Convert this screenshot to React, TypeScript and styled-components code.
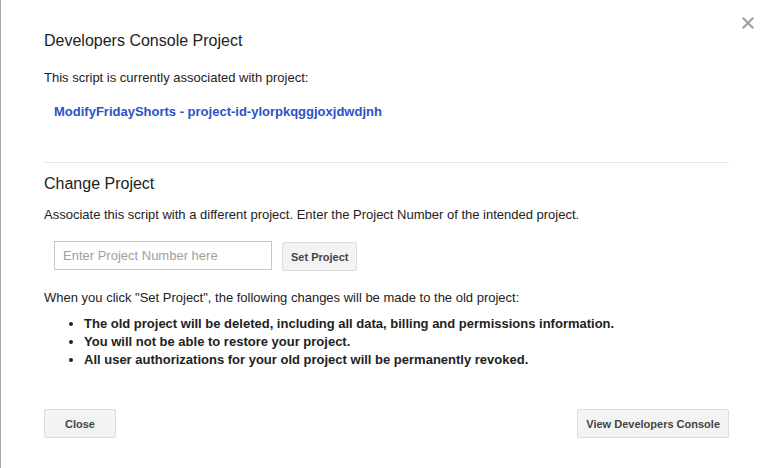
import React from "react";
import styled, { createGlobalStyle } from "styled-components";

const Global = createGlobalStyle`
  html, body { margin: 0; padding: 0; background: #fff; }
  body { font-family: "Liberation Sans", Arial, sans-serif; color: #222; }
  * { box-sizing: border-box; }
`;

const Dialog = styled.div`
  position: relative;
  width: 771px;
  height: 468px;
  border-left: 1px solid #a8a8a8;
  padding: 31px 42px 0 43px;
  background: #fff;
`;

const CloseX = styled.button`
  position: absolute;
  top: 16px;
  right: 16px;
  width: 14px;
  height: 14px;
  padding: 0;
  border: 0;
  background: transparent;
  cursor: pointer;
  display: flex;
  align-items: center;
  justify-content: center;
`;

const Title = styled.h2`
  margin: 0;
  font-size: 16px;
  line-height: 20px;
  font-weight: normal;
  color: #222;
`;

const Text = styled.p<{ $top: number }>`
  margin: ${(p) => p.$top}px 0 0;
  font-size: 13px;
  line-height: 16px;
  color: #222;
`;

const ProjectLink = styled.a`
  display: block;
  margin-top: 18px;
  padding-left: 10px;
  font-size: 13px;
  line-height: 16px;
  font-weight: bold;
  color: #2b52c6;
  text-decoration: none;
`;

const Divider = styled.hr`
  margin: 42px 0 0;
  border: 0;
  border-top: 1px solid #e5e5e5;
  height: 0;
`;

const Section = styled.div`
  margin-top: 11px;
`;

const InputRow = styled.div`
  display: flex;
  align-items: flex-start;
  gap: 10px;
  margin-top: 18px;
  padding-left: 10px;
`;

const Input = styled.input`
  width: 218px;
  height: 29px;
  border: 1px solid #c8c8c8;
  border-top-color: #c0c0c0;
  padding: 0 8px;
  font-family: "Liberation Sans", Arial, sans-serif;
  font-size: 13px;
  color: #222;
  outline: none;
  &::placeholder { color: #a0a0a0; }
`;

const Button = styled.button<{ $offset?: number }>`
  height: 29px;
  min-width: 72px;
  margin-top: ${(p) => p.$offset ?? 0}px;
  padding: 0 8px;
  border: 1px solid #dcdcdc;
  border-radius: 2px;
  background: #f3f3f3;
  font-family: "Liberation Sans", Arial, sans-serif;
  font-size: 11px;
  font-weight: bold;
  color: #444;
  cursor: pointer;
`;

const List = styled.ul`
  margin: 9px 0 0;
  padding-left: 40px;
  font-size: 13px;
  line-height: 18px;
  font-weight: bold;
  color: #222;
`;

const Footer = styled.div`
  display: flex;
  justify-content: space-between;
  margin-top: 40px;
`;

export default function App() {
  return (
    <>
      <Global />
      <Dialog>
        <CloseX aria-label="Close">
          <svg width="12" height="12" viewBox="0 0 12 12">
            <path d="M1.5 1.5 L10.5 10.5 M10.5 1.5 L1.5 10.5" stroke="#a0a0a0" strokeWidth="2.2" strokeLinecap="square" />
          </svg>
        </CloseX>
        <Title>Developers Console Project</Title>
        <Text $top={19}>This script is currently associated with project:</Text>
        <ProjectLink href="#">ModifyFridayShorts - project-id-ylorpkqggjoxjdwdjnh</ProjectLink>
        <Divider />
        <Section>
          <Title>Change Project</Title>
          <Text $top={13}>
            Associate this script with a different project. Enter the Project Number of the intended project.
          </Text>
          <InputRow>
            <Input placeholder="Enter Project Number here" />
            <Button $offset={1}>Set Project</Button>
          </InputRow>
          <Text $top={19}>When you click "Set Project", the following changes will be made to the old project:</Text>
          <List>
            <li>The old project will be deleted, including all data, billing and permissions information.</li>
            <li>You will not be able to restore your project.</li>
            <li>All user authorizations for your old project will be permanently revoked.</li>
          </List>
        </Section>
        <Footer>
          <Button>Close</Button>
          <Button>View Developers Console</Button>
        </Footer>
      </Dialog>
    </>
  );
}
